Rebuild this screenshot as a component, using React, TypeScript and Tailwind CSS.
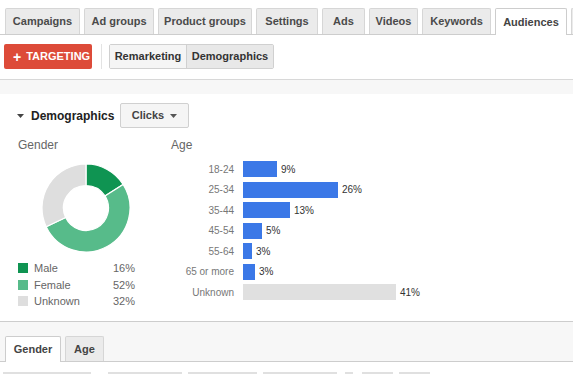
import React from "react";

const tabs = [
  { t: "Campaigns", w: 75 },
  { t: "Ad groups", w: 70 },
  { t: "Product groups", w: 94 },
  { t: "Settings", w: 62 },
  { t: "Ads", w: 43 },
  { t: "Videos", w: 49 },
  { t: "Keywords", w: 69 },
  { t: "Audiences", w: 72 },
];

const ages = [
  { label: "18-24", w: 34, pct: "9%" },
  { label: "25-34", w: 95, pct: "26%" },
  { label: "35-44", w: 47, pct: "13%" },
  { label: "45-54", w: 19, pct: "5%" },
  { label: "55-64", w: 9, pct: "3%" },
  { label: "65 or more", w: 12, pct: "3%" },
  { label: "Unknown", w: 153, pct: "41%", gray: true },
];

function arc(s: number, e: number, R: number, r: number, c: number) {
  const a0 = s * 2 * Math.PI - Math.PI / 2;
  const a1 = e * 2 * Math.PI - Math.PI / 2;
  const large = e - s > 0.5 ? 1 : 0;
  const p = (rad: number, a: number) => `${c + rad * Math.cos(a)} ${c + rad * Math.sin(a)}`;
  return `M ${p(R, a0)} A ${R} ${R} 0 ${large} 1 ${p(R, a1)} L ${p(r, a1)} A ${r} ${r} 0 ${large} 0 ${p(r, a0)} Z`;
}

function Donut() {
  const segs = [
    { s: 0, e: 0.16, c: "#0f9452" },
    { s: 0.16, e: 0.68, c: "#57bb8a" },
    { s: 0.68, e: 1, c: "#dedede" },
  ];
  return (
    <svg width="88" height="88" viewBox="0 0 88 88">
      {segs.map((g, i) => (
        <path key={i} d={arc(g.s, g.e, 44, 22.5, 44)} fill={g.c} stroke="#fff" strokeWidth="1.2" />
      ))}
    </svg>
  );
}

export default function App() {
  return (
    <div className="w-[573px] h-[374px] overflow-hidden bg-white font-['Liberation_Sans',Arial,sans-serif]">
      {/* top tabs */}
      <div className="flex gap-[4px] pl-[5px] pt-[8px] border-b border-[#cdcdcd] whitespace-nowrap">
        {tabs.map(({ t, w }) => {
          const active = t === "Audiences";
          return (
            <div
              key={t}
              style={{ width: w }}
              className={
                active
                  ? "shrink-0 h-[27px] -mb-px flex items-center justify-center border border-b-0 border-[#cdcdcd] bg-white text-[11px] font-bold text-[#444] rounded-t-[2px]"
                  : "shrink-0 h-[26px] flex items-center justify-center border border-b-0 border-[#d6d6d6] bg-[#ebebeb] text-[11px] font-bold text-[#4a4a4a] rounded-t-[2px]"
              }
            >
              {t}
            </div>
          );
        })}
        <div className="shrink-0 h-[26px] w-[10px] border border-b-0 border-r-0 border-[#d6d6d6] bg-[#ebebeb] rounded-tl-[2px]" />
      </div>

      {/* toolbar */}
      <div className="flex items-center pl-[4px] pt-[9px] pb-[10px] whitespace-nowrap">
        <div className="w-[88px] h-[25px] bg-[#dd4b39] rounded-[2px] flex items-center pl-[9px] text-white text-[11px] font-bold">
          <span className="text-[14px] leading-none mr-[5px]">+</span>
          <span>TARGETING</span>
        </div>
        <div className="ml-[9px] w-px h-[25px] bg-[#e3e3e3]" />
        <div className="ml-[7px] flex h-[25px] border border-[#d0d0d0] rounded-[2px] text-[11px] font-bold text-[#333]">
          <div className="w-[76px] flex items-center justify-center bg-[#f5f5f5]">Remarketing</div>
          <div className="w-[87px] flex items-center justify-center bg-[#e8e8e8] border-l border-[#d0d0d0]">Demographics</div>
        </div>
      </div>

      <div className="border-t border-[#d8d8d8] h-[15px] bg-[#f7f7f7]" />

      {/* main */}
      <div className="h-[227px] pt-[9px]">
        <div className="flex items-center h-[25px]">
          <div className="w-[120px] flex items-center pl-[17px]">
            <svg width="7" height="4" viewBox="0 0 7 4" className="mr-[7px]">
              <path d="M0 0 L7 0 L3.5 4 Z" fill="#444" />
            </svg>
            <span className="text-[12px] font-bold text-[#222]">Demographics</span>
          </div>
          <div className="w-[69px] h-[25px] flex items-center justify-center bg-[#f5f5f5] border border-[#d0d0d0] rounded-[2px] text-[11px] font-bold text-[#444]">
            Clicks
            <svg width="7" height="4" viewBox="0 0 7 4" className="ml-[6px]">
              <path d="M0 0 L7 0 L3.5 4 Z" fill="#555" />
            </svg>
          </div>
        </div>

        <div className="flex mt-[10px]">
          <div className="w-[171px] pl-[18px]">
            <div className="text-[12px] leading-[14px] text-[#666]">Gender</div>
            <div className="ml-[24px] mt-[12px]">
              <Donut />
            </div>
            <div className="mt-[8px] text-[11px] text-[#666]">
              {[
                { n: "Male", p: "16%", c: "#0f9452" },
                { n: "Female", p: "52%", c: "#57bb8a" },
                { n: "Unknown", p: "32%", c: "#dedede" },
              ].map((r) => (
                <div key={r.n} className="flex items-center h-[16.5px]">
                  <div className="w-[10px] h-[10px]" style={{ background: r.c }} />
                  <div className="ml-[6px] w-[79px]">{r.n}</div>
                  <div>{r.p}</div>
                </div>
              ))}
            </div>
          </div>
          <div>
            <div className="text-[12px] leading-[14px] text-[#666]">Age</div>
            <div className="mt-[7px]">
              {ages.map((a) => (
                <div key={a.label} className="flex items-center h-[20.5px] whitespace-nowrap">
                  <div className="w-[63px] text-right text-[10px] text-[#777]">{a.label}</div>
                  <div
                    className={`ml-[9px] h-[16px] ${a.gray ? "bg-[#e0e0e0]" : "bg-[#3b78e7]"}`}
                    style={{ width: a.w }}
                  />
                  <div className="ml-[4px] text-[10px] text-[#333]">{a.pct}</div>
                </div>
              ))}
            </div>
          </div>
        </div>
      </div>

      {/* bottom tabs */}
      <div className="border-t border-[#cdcdcd] bg-[#f7f7f7] pt-[14px] pl-[5px] flex gap-[4px] border-b">
        <div className="h-[26px] -mb-px w-[56px] flex items-center justify-center bg-white border border-b-0 border-[#cdcdcd] text-[11px] font-bold text-[#444] rounded-t-[2px]">
          Gender
        </div>
        <div className="h-[25px] w-[39px] flex items-center justify-center bg-[#ebebeb] border border-b-0 border-[#d6d6d6] text-[11px] font-bold text-[#444] rounded-t-[2px]">
          Age
        </div>
      </div>
      <div className="flex pt-[10px] pl-[3px]">
        <div className="w-[88px] h-[2px] bg-[#e0e0e0]" />
        <div className="ml-[17px] w-[74px] h-[2px] bg-[#e0e0e0]" />
        <div className="ml-[6px] w-[69px] h-[2px] bg-[#e0e0e0]" />
        <div className="ml-[6px] w-[74px] h-[2px] bg-[#e0e0e0]" />
        <div className="ml-[8px] w-[8px] h-[2px] bg-[#e0e0e0]" />
        <div className="ml-[9px] w-[31px] h-[2px] bg-[#e0e0e0]" />
        <div className="ml-[6px] w-[31px] h-[2px] bg-[#e0e0e0]" />
      </div>
    </div>
  );
}
